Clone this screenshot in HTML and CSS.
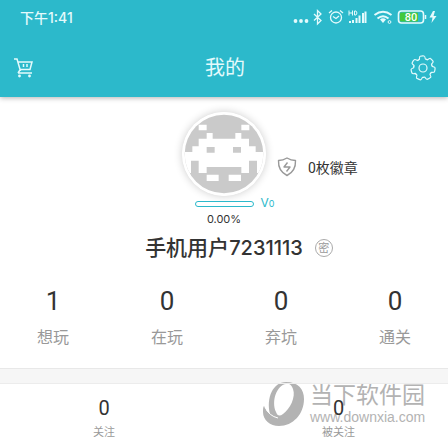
FILE: index.html
```html
<!DOCTYPE html>
<html lang="zh-CN">
<head>
<meta charset="utf-8">
<meta name="viewport" content="width=device-width, initial-scale=1">
<title>我的</title>
<link rel="stylesheet" href="styles.css">
</head>
<body>
<header class="top">
  <div class="status">
    <span class="time">下午1:41</span>
    <svg class="status-icons" viewBox="0 0 146 18" width="146" height="18" fill="none" stroke="currentColor" aria-hidden="true">
      <g fill="currentColor" stroke="none">
        <circle cx="2.5" cy="13" r="1.9"/><circle cx="8" cy="13" r="1.9"/><circle cx="13.5" cy="13" r="1.9"/>
        <path d="M56 15v-2h2v2zM59 15v-3h2v3zM62.500 15v-5h2v5zM65.500 15V7.500h2V15zM69 15V5h2v10z"/>
        <path d="M71.500 3.500h2V15h-2z"/>
        <path d="M90 15l-3-3.500q3-2.400 6 0z"/>
        <path d="M140 3l-3.500 6.500h3l-1 5.500 5-7h-3l1.500-5z"/>
      </g>
      <path d="M21 6l7 6.500-3.500 3.500V2.500L28 6l-7 6.500" stroke-width="1.300"/>
      <circle cx="43" cy="9.500" r="5.500" stroke-width="1.300"/>
      <path d="M40 8.500l3 2 3-2.500M36 5l3-2.500M50 5l-3-2.500" stroke-width="1.300"/>
      <path d="M56 2.500v5M59.500 2.500v5M56 5h3.500M61.500 3v4h1.500q2-2 0-4z" stroke-width="1"/>
      <path d="M81.500 7q8.500-6.500 17 0M84.500 10.500q5.500-4.500 11 0" stroke-width="2"/>
      <circle cx="96.500" cy="14" r="1.400" stroke-width="1"/>
      <rect x="105.500" y="3" width="25" height="12" rx="3" stroke-width="1.600"/>
      <rect x="107" y="4.500" width="18" height="9" rx="1" fill="#43c83c" stroke="none"/>
      <path d="M132.500 7v4" stroke-width="1.500"/>
      <text class="battery-text" x="118" y="13" text-anchor="middle">80</text>
    </svg>
  </div>
  <nav class="bar">
    <button class="icon-button" aria-label="购物车">
      <svg viewBox="0 0 20 20" width="20" height="20" fill="none" stroke="currentColor" stroke-width="1.500">
        <path d="M0 1h3l3.500 12M4.500 4H18l-2 7.500H6M4 15h14M6 12l-2 3"/>
        <path d="M9.500 6v3M13 6v3"/>
        <circle cx="5.500" cy="18" r="1.400" fill="currentColor" stroke="none"/><circle cx="15.500" cy="18" r="1.400" fill="currentColor" stroke="none"/>
      </svg>
    </button>
    <h1 class="title">我的</h1>
    <button class="icon-button" aria-label="设置">
      <svg viewBox="0 0 26 26" width="26" height="26" fill="none" stroke="currentColor" stroke-width="1.200" stroke-linejoin="round" stroke-linecap="round">
        <defs><path id="tooth" d="M8.970 4.620L10 4.200Q10.300 1.200 11 1.100Q13 .7 15 1.100Q15.700 1.200 16 4.200L17.030 4.620"/></defs>
        <use href="#tooth" transform="rotate(-4 13 13)"/>
        <use href="#tooth" transform="rotate(47.430 13 13)"/>
        <use href="#tooth" transform="rotate(98.860 13 13)"/>
        <use href="#tooth" transform="rotate(150.290 13 13)"/>
        <use href="#tooth" transform="rotate(201.710 13 13)"/>
        <use href="#tooth" transform="rotate(253.140 13 13)"/>
        <use href="#tooth" transform="rotate(304.570 13 13)"/>
        <circle cx="13" cy="13" r="4"/>
      </svg>
    </button>
  </nav>
</header>
<main>
  <section class="profile">
    <div class="identity">
      <div class="avatar-column">
        <svg class="avatar" viewBox="37 32 252 252" width="84" height="84" role="img" aria-label="头像">
          <defs><clipPath id="disc"><circle cx="163" cy="158" r="118"/></clipPath></defs>
          <circle cx="163" cy="158" r="126" fill="#fff"/>
          <g clip-path="url(#disc)">
            <path fill="#cacaca" d="M40 30h250v250H40z"/>
            <path fill="#fff" d="M87 70h24v17H87zM215 70h24v17h-24zM111 95h18v17h68V95h18v17h23v23h20v17h30v63h-26v-37h-24v37h-23v-18H111v18H87v-37H64v37H34v-63h34v-17h19v-23h24zM111 220h36v19h-36zM177 220h37v19h-37z"/>
            <path fill="#cacaca" d="M111 137h24v17h-24zM190 137h24v17h-24z"/>
          </g>
        </svg>
        <div class="level">
          <div class="progress"></div>
          <span class="level-name">V<small>0</small></span>
        </div>
        <span class="percent">0.00%</span>
      </div>
      <a class="badges" href="#">
        <svg viewBox="0 0 20 20" width="20" height="20" fill="none" stroke="#999" stroke-width="1.400" stroke-linejoin="round">
          <path d="M10 1Q14 3.500 18.500 3.500Q19 14 10 18.500Q1 14 1.500 3.500Q6 3.500 10 1z"/>
          <path d="M10.500 5.500L7 10h6l-3.500 4.500"/>
        </svg>
        <span>0枚徽章</span>
      </a>
    </div>
    <div class="name-row">
      <h2 class="name">手机用户<span class="digits">7231113</span></h2>
      <span class="secret">密</span>
    </div>
    <ul class="stats">
      <li><b>1</b><span>想玩</span></li>
      <li><b>0</b><span>在玩</span></li>
      <li><b>0</b><span>弃坑</span></li>
      <li><b>0</b><span>通关</span></li>
    </ul>
  </section>
  <section class="social">
    <ul class="follows">
      <li><b>0</b><span>关注</span></li>
      <li><b>0</b><span>被关注</span></li>
    </ul>
    <div class="watermark">
      <svg viewBox="0 0 42 44" width="42" height="44" aria-hidden="true">
        <path fill="#b3b3b3" fill-rule="evenodd" d="M23 0C35 0 41 7 41 17C41 32 30 44 16 44C7 44 0 38 0 30C0 27 0 25 1 24Q3 29 7 32C3 16 10 0 23 0zM23 2C14 3 8 19 13 30Q15 36 20 32C27 27 33 15 30 7Q28 1 23 2z"/>
        <path fill="none" stroke="#fff" stroke-width="1" d="M2 25Q6 34 15 36"/>
      </svg>
      <div class="watermark-text">
        <span class="site">当下软件园</span>
        <span class="url">www.downxia.com</span>
      </div>
    </div>
  </section>
</main>
</body>
</html>
```
FILE: styles.css
```css
* {
  box-sizing: border-box;
}

body {
  margin: 0;
  background: #fff;
  color: #333;
  font-family: Inter, "Noto Sans CJK SC", sans-serif;
  overflow-x: hidden;
}

h1, h2, ul {
  margin: 0;
  padding: 0;
}

.top {
  position: relative;
  z-index: 1;
  background: #2cb9cb;
  color: #e4fafc;
  box-shadow: 0 1px 5px rgba(0, 0, 0, 0.3);
}

.status {
  display: flex;
  align-items: center;
  justify-content: space-between;
  height: 34px;
  padding: 0 9px 0 20px;
}

.time {
  font-size: 14px;
  font-weight: 500;
}

.battery-text {
  fill: #fff;
  stroke: none;
  font-family: Roboto, sans-serif;
  font-size: 11px;
  font-weight: 500;
}

.bar {
  display: grid;
  grid-template-columns: 1fr auto 1fr;
  align-items: center;
  height: 63px;
  padding: 4px 12px 0 14px;
}

.icon-button {
  display: flex;
  justify-self: start;
  padding: 0;
  border: 0;
  background: none;
  color: inherit;
}

.icon-button:last-child {
  justify-self: end;
}

.title {
  font-size: 20px;
  font-weight: 400;
  line-height: 30px;
}

.profile {
  padding-top: 15px;
  border-bottom: 1px solid #e8e8e8;
}

.identity {
  display: grid;
  grid-template-columns: 1fr auto 1fr;
}

.avatar-column {
  grid-column: 2;
  display: flex;
  flex-direction: column;
  align-items: center;
  width: 86px;
}

.avatar {
  border-radius: 50%;
  box-shadow: 0 0 8px rgba(0, 0, 0, 0.2);
}

.level {
  position: relative;
  display: flex;
  align-items: center;
  height: 15px;
}

.progress {
  width: 59px;
  height: 6px;
  border: 1px solid #2cb9cb;
  border-radius: 3px;
}

.level-name {
  position: absolute;
  left: 66px;
  color: #2cb9cb;
  font-size: 12px;
  line-height: 16px;
}

.level-name small {
  font-size: 9px;
}

.percent {
  font-size: 11px;
  line-height: 16px;
}

.badges {
  display: flex;
  align-items: center;
  gap: 11px;
  height: 20px;
  margin: 45px 0 0 10px;
  color: #333;
  font-family: Roboto, "Noto Sans CJK SC", sans-serif;
  font-size: 14px;
  text-decoration: none;
}

.name-row {
  display: flex;
  align-items: center;
  justify-content: center;
  gap: 12px;
  height: 42px;
  padding-left: 30px;
}

.name {
  font-size: 21px;
  font-weight: 500;
  line-height: 32px;
}

.digits {
  font-size: 20px;
}

.secret {
  width: 18px;
  height: 18px;
  border: 1px solid #aaa;
  border-radius: 50%;
  color: #999;
  font-size: 11px;
  line-height: 16px;
  text-align: center;
}

.stats,
.follows {
  display: flex;
  justify-content: space-between;
  list-style: none;
}

.stats li,
.follows li {
  display: flex;
  flex-direction: column;
  align-items: center;
}

.stats b,
.follows b {
  font-family: Roboto, sans-serif;
  font-weight: 400;
}

.stats {
  padding: 14px 37px 13px;
}

.stats b {
  font-size: 26px;
  line-height: 36px;
}

.stats span {
  color: #999;
  font-size: 16px;
  line-height: 36px;
}

.social {
  position: relative;
  border-top: 14px solid #f6f6f6;
}

.follows {
  position: relative;
  z-index: 1;
  padding: 11px 93px 6px;
  border-top: 1px solid #ececec;
}

.follows b {
  font-size: 20px;
  line-height: 26px;
}

.follows span {
  color: #999;
  font-size: 11px;
  line-height: 22px;
}

.watermark {
  position: absolute;
  top: -1px;
  right: 24px;
  display: flex;
  gap: 5px;
  color: #b3b3b3;
}

.watermark-text {
  display: flex;
  flex-direction: column;
  width: 114px;
  white-space: nowrap;
}

.site {
  font-size: 23px;
  font-weight: 400;
  line-height: 26px;
}

.url {
  font-family: "Liberation Sans", sans-serif;
  font-size: 14px;
  line-height: 18px;
}
```
